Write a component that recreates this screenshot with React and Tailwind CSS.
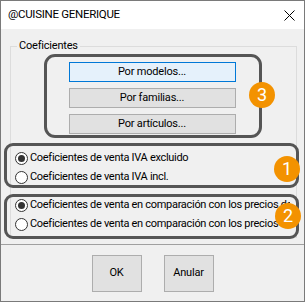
import React from 'react';

const Badge = ({ n, className }) => (
  <div
    className={`absolute w-[26px] h-[26px] rounded-full bg-[#f39200] text-white flex items-center justify-center text-[18px] leading-none ${className}`}
  >
    {n}
  </div>
);

const Radio = ({ checked, label }) => (
  <div className="flex items-center h-[14px] whitespace-nowrap overflow-hidden">
    <span className="w-[13px] h-[13px] shrink-0 rounded-full border border-[#333] bg-white flex items-center justify-center">
      {checked && <span className="w-[7px] h-[7px] rounded-full bg-[#333]" />}
    </span>
    <span className="ml-[2px] tracking-[-0.3px]">{label}</span>
  </div>
);

const WinButton = ({ children, focused, className = '' }) => (
  <button
    className={`border text-[11px] tracking-[-0.2px] text-black ${
      focused ? 'bg-[#e5f1fb] border-[#0078d7]' : 'bg-[#e1e1e1] border-[#adadad]'
    } ${className}`}
  >
    {children}
  </button>
);

export default function App() {
  return (
    <div
      className="w-[305px] h-[302px] border border-[#7a7a7a] bg-[#f0f0f0] flex flex-col text-[11px] text-black overflow-hidden"
      style={{ fontFamily: 'Roboto, "Noto Sans", sans-serif' }}
    >
      {/* title bar */}
      <div className="h-[28px] bg-white flex items-center justify-between pl-[7px] pr-[8px] shrink-0">
        <span className="text-[11.5px] tracking-[-0.3px]">@CUISINE GENERIQUE</span>
        <svg width="11" height="11" viewBox="0 0 11 11" className="mr-[1px]">
          <path d="M0.5 0.5 L10.5 10.5 M10.5 0.5 L0.5 10.5" stroke="#000" strokeWidth="1" fill="none" />
        </svg>
      </div>

      {/* body */}
      <div className="h-[216px] border-b border-[#a0a0a0] shrink-0 pt-[10px]">
        <fieldset className="ml-[9px] mr-[7px] min-w-0 border border-[#dcdcdc] px-0 pb-0">
          <legend className="ml-[6px] px-[2px] leading-[14px] tracking-[-0.2px]">Coeficientes</legend>

          <div className="relative ml-[33px] w-[218px] mt-[1px] border-[3px] border-[#555] rounded-[11px] pt-[5px] pb-[1px] flex flex-col items-center gap-[6px]">
            <WinButton focused className="w-[167px] h-[20px] ml-[-2px]">Por modelos...</WinButton>
            <WinButton className="w-[167px] h-[20px] ml-[-2px]">Por familias...</WinButton>
            <WinButton className="w-[167px] h-[20px] ml-[-2px]">Por artículos...</WinButton>
            <Badge n="3" className="right-[-16px] top-[25px]" />
          </div>

          <div className="relative ml-[-7px] mr-[-3px] mt-[5px] border-[3px] border-[#555] rounded-[9px] pl-[8px] pr-[6px] pt-[5px] pb-[1px] flex flex-col gap-[5px]">
            <Radio checked label="Coeficientes de venta IVA excluido" />
            <Radio label="Coeficientes de venta IVA incl." />
            <Badge n="1" className="right-[-4px] top-[10px]" />
          </div>

          <div className="relative ml-[-7px] mr-[-3px] mt-[6px] mb-[-2px] border-[3px] border-[#555] rounded-[9px] pl-[8px] pr-[6px] pt-[1px] pb-[5px] flex flex-col gap-[5px]">
            <Radio checked label="Coeficientes de venta en comparación con los precios del proveedor" />
            <Radio label="Coeficientes de venta en comparación con los precios de compra" />
            <Badge n="2" className="right-[-5px] top-[6px]" />
          </div>
        </fieldset>
      </div>

      {/* footer */}
      <div className="flex-1 flex justify-center items-start pt-[10px] gap-[22px]">
        <WinButton className="w-[50px] h-[37px]">OK</WinButton>
        <WinButton className="w-[50px] h-[37px]">Anular</WinButton>
      </div>
    </div>
  );
}
